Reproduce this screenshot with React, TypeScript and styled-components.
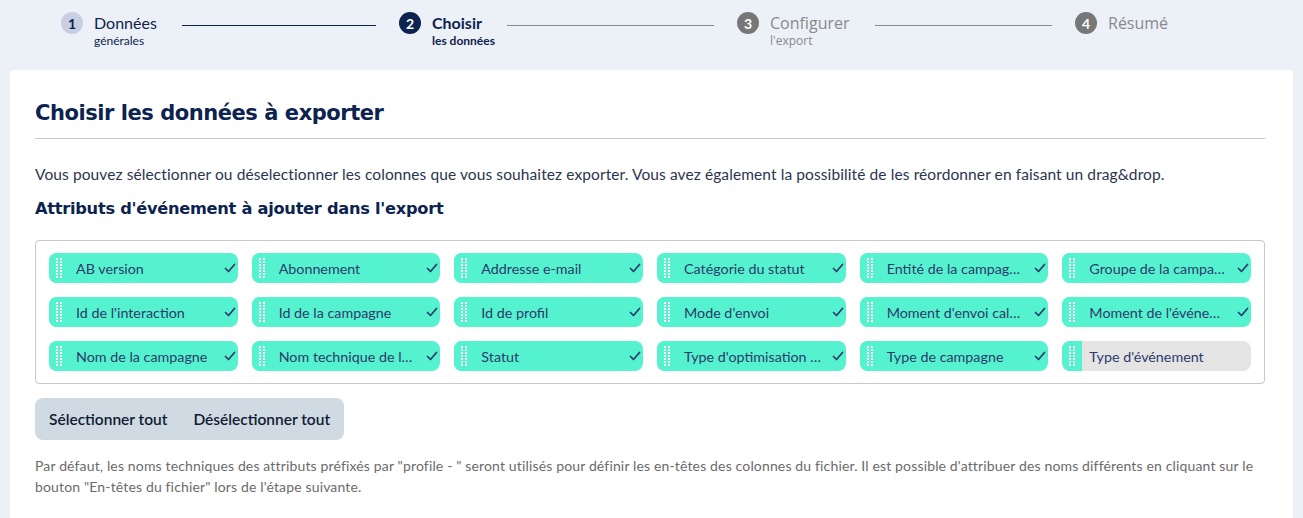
import React from 'react';
import styled, { createGlobalStyle, css } from 'styled-components';

const navy = '#0c2350';
const ink = '#2d3a6b';
const teal = '#55f2cf';

type StepState = 'done' | 'active' | 'todo';

const steps: { n: number; title: string; sub: string; state: StepState }[] = [
  { n: 1, title: 'Données', sub: 'générales', state: 'done' },
  { n: 2, title: 'Choisir', sub: 'les données', state: 'active' },
  { n: 3, title: 'Configurer', sub: "l'export", state: 'todo' },
  { n: 4, title: 'Résumé', sub: '', state: 'todo' },
];

const attributes = [
  { label: 'AB version', on: true },
  { label: 'Abonnement', on: true },
  { label: 'Addresse e-mail', on: true },
  { label: 'Catégorie du statut', on: true },
  { label: 'Entité de la campagne', on: true },
  { label: 'Groupe de la campagne', on: true },
  { label: "Id de l'interaction", on: true },
  { label: 'Id de la campagne', on: true },
  { label: 'Id de profil', on: true },
  { label: "Mode d'envoi", on: true },
  { label: "Moment d'envoi calculé", on: true },
  { label: "Moment de l'événement", on: true },
  { label: 'Nom de la campagne', on: true },
  { label: 'Nom technique de la campagne', on: true },
  { label: 'Statut', on: true },
  { label: "Type d'optimisation d'envoi", on: true },
  { label: 'Type de campagne', on: true },
  { label: "Type d'événement", on: false },
];

const GlobalStyle = createGlobalStyle`
  html, body {
    margin: 0;
    padding: 0;
    background: #ecf0f7;
    font-family: Lato, "Noto Sans", sans-serif;
    overflow: hidden;
  }
`;

const Page = styled.div`
  padding: 0 10px;
  min-height: 518px;
`;

const Stepper = styled.nav`
  height: 70px;
  display: grid;
  grid-template-columns: repeat(3, 338px) auto;
  align-items: start;
  padding: 12px 0 0 51px;
  box-sizing: border-box;
`;

const Step = styled.div`
  display: flex;
  align-items: flex-start;
  white-space: nowrap;
`;

const StepBadge = styled.span<{ $state: StepState }>`
  width: 22px;
  height: 22px;
  flex: none;
  margin-right: 11px;
  border-radius: 50%;
  display: inline-flex;
  align-items: center;
  justify-content: center;
  font-size: 14px;
  font-weight: 700;
  ${({ $state }) =>
    $state === 'done'
      ? css`
          background: #c8cfe2;
          color: ${navy};
        `
      : $state === 'active'
        ? css`
            background: ${navy};
            color: #ffffff;
          `
        : css`
            background: #777777;
            color: #ffffff;
          `}
`;

const StepText = styled.div<{ $state: StepState }>`
  display: flex;
  flex-direction: column;
  color: ${({ $state }) => ($state === 'todo' ? '#8a8a8a' : navy)};
  font-family: ${({ $state }) =>
    $state === 'todo' ? '"Open Sans", sans-serif' : 'Lato, sans-serif'};
`;

const StepTitle = styled.span<{ $state: StepState }>`
  font-size: 16px;
  line-height: 22px;
  font-weight: ${({ $state }) => ($state === 'active' ? 700 : 400)};
`;

/* the subtitle hangs under the title without widening the step */
const StepSub = styled.span<{ $state: StepState }>`
  width: 0;
  overflow: visible;
  font-size: 12px;
  line-height: 14px;
  font-weight: ${({ $state }) => ($state === 'active' ? 700 : 400)};
`;

const Connector = styled.span<{ $done: boolean }>`
  flex: 1;
  height: 1px;
  margin: 13px 23px 0 25px;
  background: ${({ $done }) => ($done ? navy : '#8a8a8a')};
`;

const Card = styled.main`
  background: #ffffff;
  border-radius: 4px 4px 0 0;
  padding: 27px 28px 30px 25px;
  min-height: 448px;
  box-sizing: border-box;
`;

const Title = styled.h1`
  margin: 0;
  padding-bottom: 9px;
  border-bottom: 1px solid #c9c9c9;
  font-family: "DejaVu Sans", Inter, sans-serif;
  font-size: 21px;
  line-height: 32px;
  font-weight: 700;
  color: ${navy};
  letter-spacing: -0.45px;
`;

const Intro = styled.p`
  margin: 24px 0 0;
  font-size: 15.5px;
  line-height: 22px;
  letter-spacing: 0.1px;
  color: #2b3450;
`;

const SectionTitle = styled.h2`
  margin: 12px 0 0;
  font-family: "DejaVu Sans", Inter, sans-serif;
  font-size: 16.2px;
  line-height: 24px;
  font-weight: 700;
  color: ${navy};
  letter-spacing: -0.25px;
`;

const ChipBox = styled.div`
  margin-top: 19px;
  border: 1px solid #c9c9c9;
  border-radius: 4px;
  padding: 12px 13px;
  display: grid;
  grid-template-columns: repeat(6, minmax(0, 1fr));
  gap: 14px;
`;

const Chip = styled.div<{ $on: boolean }>`
  height: 30px;
  border-radius: 8px;
  display: flex;
  align-items: center;
  overflow: hidden;
  background: ${({ $on }) => ($on ? teal : '#e4e4e4')};
`;

const Handle = styled.span`
  width: 20px;
  height: 100%;
  flex: none;
  background: ${teal};
  display: flex;
  align-items: center;
  justify-content: center;
`;

const ChipLabel = styled.span`
  flex: 1;
  min-width: 0;
  padding-left: 7px;
  font-size: 14.3px;
  color: ${ink};
  white-space: nowrap;
  overflow: hidden;
  text-overflow: ellipsis;
`;

const Check = styled.span`
  flex: none;
  width: 24px;
  padding-right: 2px;
  box-sizing: border-box;
  display: flex;
  align-items: center;
  justify-content: flex-end;
`;

const ButtonGroup = styled.div`
  margin-top: 14px;
  display: inline-flex;
  background: #d0dae3;
  border-radius: 8px;
  height: 42px;
  align-items: center;
  padding: 0 14px;
  gap: 26px;
`;

const GroupButton = styled.button`
  border: none;
  background: transparent;
  padding: 0;
  font-family: Lato, sans-serif;
  font-size: 15.5px;
  font-weight: 600;
  color: #111a33;
  cursor: pointer;
`;

const Note = styled.p`
  margin: 15px 0 0;
  font-size: 14px;
  line-height: 21px;
  letter-spacing: 0.15px;
  color: #6b6b6b;
`;

const DragDots = () => (
  <svg width="6" height="21" viewBox="0 0 6 21">
    {Array.from({ length: 7 }).map((_, i) => (
      <g key={i} fill="#ffffff">
        <rect x="0" y={i * 3} width="2" height="2" />
        <rect x="4" y={i * 3} width="2" height="2" />
      </g>
    ))}
  </svg>
);

const CheckMark = () => (
  <svg width="12" height="12" viewBox="0 0 12 12">
    <path
      d="M1.5 6.5 L4.5 9.5 L10.5 2.5"
      fill="none"
      stroke={ink}
      strokeWidth="1.7"
      strokeLinecap="round"
      strokeLinejoin="round"
    />
  </svg>
);

const App: React.FC = () => {
  return (
    <>
      <GlobalStyle />
      <Page>
        <Stepper>
          {steps.map((step, i) => (
            <Step key={step.n}>
              <StepBadge $state={step.state}>{step.n}</StepBadge>
              <StepText $state={step.state}>
                <StepTitle $state={step.state}>{step.title}</StepTitle>
                {step.sub && <StepSub $state={step.state}>{step.sub}</StepSub>}
              </StepText>
              {i < steps.length - 1 && <Connector $done={step.state === 'done'} />}
            </Step>
          ))}
        </Stepper>

        <Card>
          <Title>Choisir les données à exporter</Title>
          <Intro>
            Vous pouvez sélectionner ou déselectionner les colonnes que vous souhaitez exporter. Vous
            avez également la possibilité de les réordonner en faisant un drag&amp;drop.
          </Intro>
          <SectionTitle>Attributs d'événement à ajouter dans l'export</SectionTitle>

          <ChipBox>
            {attributes.map((attr) => (
              <Chip key={attr.label} $on={attr.on}>
                <Handle>
                  <DragDots />
                </Handle>
                <ChipLabel>{attr.label}</ChipLabel>
                {attr.on && (
                  <Check>
                    <CheckMark />
                  </Check>
                )}
              </Chip>
            ))}
          </ChipBox>

          <ButtonGroup>
            <GroupButton type="button">Sélectionner tout</GroupButton>
            <GroupButton type="button">Désélectionner tout</GroupButton>
          </ButtonGroup>

          <Note>
            Par défaut, les noms techniques des attributs préfixés par "profile - " seront utilisés pour
            définir les en-têtes des colonnes du fichier. Il est possible d'attribuer des noms différents
            en cliquant sur le bouton "En-têtes du fichier" lors de l'étape suivante.
          </Note>
        </Card>
      </Page>
    </>
  );
};

export default App;
